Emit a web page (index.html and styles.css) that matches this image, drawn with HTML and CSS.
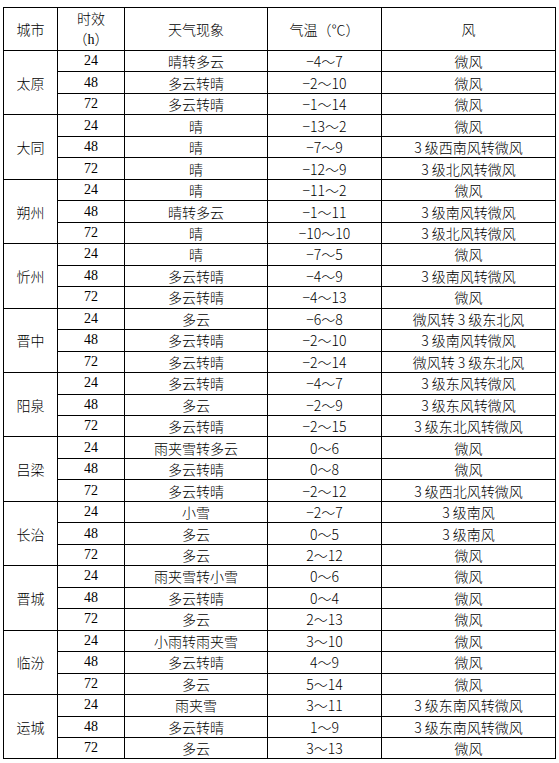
FILE: index.html
```html
<!DOCTYPE html>
<html lang="zh">
<head>
<meta charset="utf-8">
<link rel="stylesheet" href="styles.css">
</head>
<body>
<table class="fc">
<colgroup><col class="c1"><col class="c2"><col class="c3"><col class="c4"><col class="c5"></colgroup>
<thead>
<tr class="hd"><th>城市</th><th>时效<br>（<span class="ser">h</span>）</th><th>天气现象</th><th>气温（℃）</th><th>风</th></tr>
</thead>
<tbody>
<tr><td rowspan="3" class="city">太原</td><td class="h">24</td><td>晴转多云</td><td class="t">−4～7</td><td>微风</td></tr>
<tr><td class="h">48</td><td>多云转晴</td><td class="t">−2～10</td><td>微风</td></tr>
<tr><td class="h">72</td><td>多云转晴</td><td class="t">−1～14</td><td>微风</td></tr>

<tr><td rowspan="3" class="city">大同</td><td class="h">24</td><td>晴</td><td class="t">−13～2</td><td>微风</td></tr>
<tr><td class="h">48</td><td>晴</td><td class="t">−7～9</td><td>3 级西南风转微风</td></tr>
<tr><td class="h">72</td><td>晴</td><td class="t">−12～9</td><td>3 级北风转微风</td></tr>

<tr><td rowspan="3" class="city">朔州</td><td class="h">24</td><td>晴</td><td class="t">−11～2</td><td>微风</td></tr>
<tr><td class="h">48</td><td>晴转多云</td><td class="t">−1～11</td><td>3 级南风转微风</td></tr>
<tr><td class="h">72</td><td>晴</td><td class="t">−10～10</td><td>3 级北风转微风</td></tr>

<tr><td rowspan="3" class="city">忻州</td><td class="h">24</td><td>晴</td><td class="t">−7～5</td><td>微风</td></tr>
<tr><td class="h">48</td><td>多云转晴</td><td class="t">−4～9</td><td>3 级南风转微风</td></tr>
<tr><td class="h">72</td><td>多云转晴</td><td class="t">−4～13</td><td>微风</td></tr>

<tr><td rowspan="3" class="city">晋中</td><td class="h">24</td><td>多云</td><td class="t">−6～8</td><td>微风转 3 级东北风</td></tr>
<tr><td class="h">48</td><td>多云转晴</td><td class="t">−2～10</td><td>3 级南风转微风</td></tr>
<tr><td class="h">72</td><td>多云转晴</td><td class="t">−2～14</td><td>微风转 3 级东北风</td></tr>

<tr><td rowspan="3" class="city">阳泉</td><td class="h">24</td><td>多云转晴</td><td class="t">−4～7</td><td>3 级东风转微风</td></tr>
<tr><td class="h">48</td><td>多云</td><td class="t">−2～9</td><td>3 级东风转微风</td></tr>
<tr><td class="h">72</td><td>多云转晴</td><td class="t">−2～15</td><td>3 级东北风转微风</td></tr>

<tr><td rowspan="3" class="city">吕梁</td><td class="h">24</td><td>雨夹雪转多云</td><td class="t">0～6</td><td>微风</td></tr>
<tr><td class="h">48</td><td>多云转晴</td><td class="t">0～8</td><td>微风</td></tr>
<tr><td class="h">72</td><td>多云转晴</td><td class="t">−2～12</td><td>3 级西北风转微风</td></tr>

<tr><td rowspan="3" class="city">长治</td><td class="h">24</td><td>小雪</td><td class="t">−2～7</td><td>3 级南风</td></tr>
<tr><td class="h">48</td><td>多云</td><td class="t">0～5</td><td>3 级南风</td></tr>
<tr><td class="h">72</td><td>多云</td><td class="t">2～12</td><td>微风</td></tr>

<tr><td rowspan="3" class="city">晋城</td><td class="h">24</td><td>雨夹雪转小雪</td><td class="t">0～6</td><td>微风</td></tr>
<tr><td class="h">48</td><td>多云转晴</td><td class="t">0～4</td><td>微风</td></tr>
<tr><td class="h">72</td><td>多云</td><td class="t">2～13</td><td>微风</td></tr>

<tr><td rowspan="3" class="city">临汾</td><td class="h">24</td><td>小雨转雨夹雪</td><td class="t">3～10</td><td>微风</td></tr>
<tr><td class="h">48</td><td>多云转晴</td><td class="t">4～9</td><td>微风</td></tr>
<tr><td class="h">72</td><td>多云</td><td class="t">5～14</td><td>微风</td></tr>

<tr><td rowspan="3" class="city">运城</td><td class="h">24</td><td>雨夹雪</td><td class="t">3～11</td><td>3 级东南风转微风</td></tr>
<tr><td class="h">48</td><td>多云转晴</td><td class="t">1～9</td><td>3 级东南风转微风</td></tr>
<tr><td class="h">72</td><td>多云</td><td class="t">3～13</td><td>微风</td></tr>
</tbody>
</table>
</body>
</html>
```
FILE: styles.css
```css
html, body {
  margin: 0;
  padding: 0;
  background: #fff;
}
body {
  padding: 7px 0 0 3px;
  font-family: "Noto Sans CJK SC", "Noto Sans", sans-serif;
  font-size: 14px;
  font-weight: 300;
  color: #000;
}
.fc {
  border-collapse: collapse;
  table-layout: fixed;
  width: 552px;
}
.c1 { width: 54px; }
.c2 { width: 67px; }
.c3 { width: 143px; }
.c4 { width: 114px; }
.c5 { width: 174px; }
.fc th, .fc td {
  border: 1px solid #000;
  padding: 0;
  text-align: center;
  vertical-align: middle;
  font-weight: 300;
  line-height: 20px;
  height: 21.47px;
  box-sizing: border-box;
  white-space: nowrap;
}
.fc .hd th {
  height: 42.5px;
  line-height: 20px;
}
.fc td.h,
.ser {
  font-family: "Liberation Serif", "Noto Sans CJK SC", serif;
  font-size: 14px;
  font-weight: normal;
}
.fc td.t {
  font-size: 14px;
}
```
